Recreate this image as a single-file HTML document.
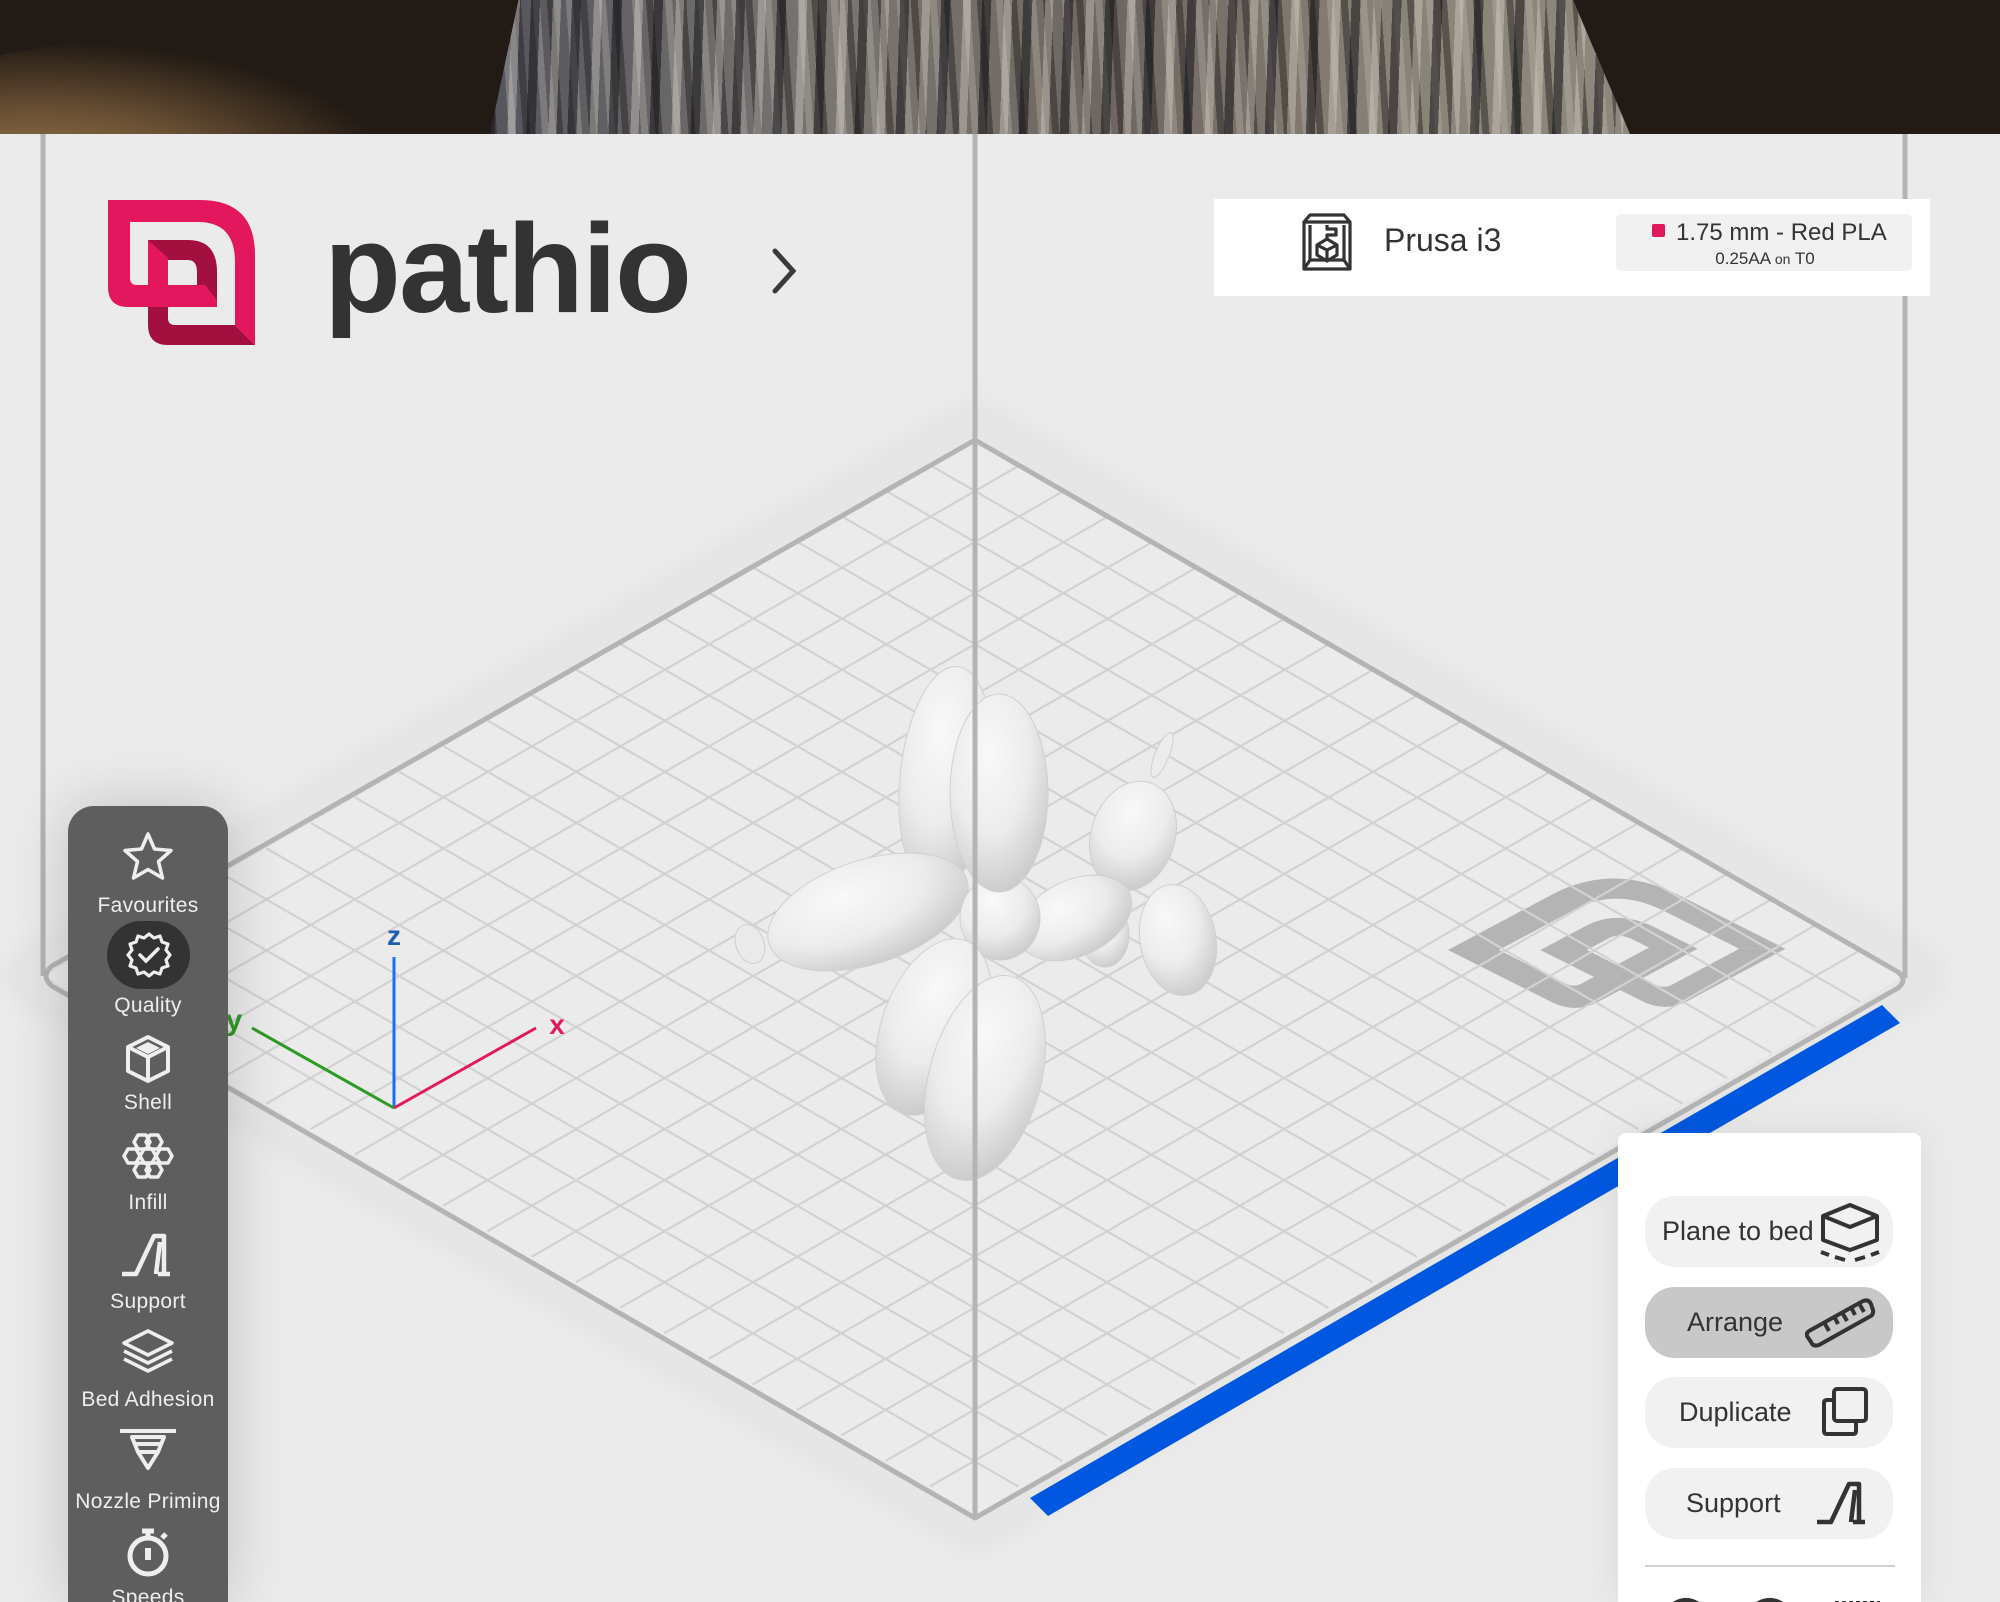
<!DOCTYPE html>
<html style="width:2000px;height:1602px;overflow:hidden;"><head><meta charset="utf-8">
<style>
html,body{margin:0;padding:0;}
body{width:2000px;height:1602px;position:relative;overflow:hidden;background:#ebebeb;font-family:"Liberation Sans",sans-serif;}
.abs{position:absolute;}
#photo{left:0;top:0;width:2000px;height:134px;background:#221a14;overflow:hidden;}
#glow{left:-120px;top:40px;width:520px;height:200px;border-radius:50%;background:radial-gradient(ellipse at 30% 70%,#9c7a4c 0%,#6a5034 35%,rgba(34,26,20,0) 70%);}
#vase{left:490px;top:0;width:1140px;height:134px;clip-path:polygon(2.5% 0,95% 0,100% 100%,0 100%);
background:
repeating-linear-gradient(92deg,rgba(20,20,25,.55) 0 9px,rgba(0,0,0,0) 9px 22px,rgba(230,225,215,.35) 22px 30px,rgba(0,0,0,0) 30px 41px),
repeating-linear-gradient(86deg,rgba(40,35,35,.5) 0 7px,rgba(0,0,0,0) 7px 19px,rgba(200,195,185,.3) 19px 26px,rgba(0,0,0,0) 26px 33px),
linear-gradient(90deg,#55555e 0%,#7a7570 30%,#6e6660 55%,#8a8378 80%,#8e877c 100%);}
.side{left:68px;top:806px;width:160px;height:796px;background:#5e5e5e;border-radius:26px 26px 0 0;box-shadow:0 0 60px rgba(0,0,0,.18);overflow:hidden;}
.lbl{position:absolute;left:0;width:160px;text-align:center;color:#eee;font-size:21px;letter-spacing:.3px;}
#panel{left:1618px;top:1133px;width:303px;height:469px;background:#fff;border-radius:8px 8px 0 0;box-shadow:0 0 40px rgba(0,0,0,.08);overflow:hidden;}
.btn{position:absolute;left:27px;width:248px;height:71px;border-radius:30px;background:#f1f1f1;color:#333;font-size:27px;}
.btn span{position:absolute;top:20px;}
.btn svg{position:absolute;}
</style></head><body>

<div id="photo" class="abs"><div id="glow" class="abs"></div><div id="vase" class="abs"></div></div>

<svg class="abs" style="left:0;top:0" width="2000" height="1602" viewBox="0 0 2000 1602">
<defs>
<filter id="blur" x="-10%" y="-10%" width="120%" height="120%"><feGaussianBlur stdDeviation="14"/></filter>
<radialGradient id="bg1" cx="40%" cy="30%" r="75%"><stop offset="0" stop-color="#f9f9f9"/><stop offset=".55" stop-color="#ececec"/><stop offset="1" stop-color="#c8c8c8"/></radialGradient>
</defs>
<path d="M975,405 L1935,960 Q1950,976 1935,992 L975,1548 L15,992 Q0,976 15,960 Z" fill="#dcdcdc" filter="url(#blur)" opacity=".7"/>
<path d="M975,408 L1932,962 Q1944,976 1932,990 L975,1543 L18,990 Q6,976 18,962 Z" fill="#e6e6e6"/>
<path d="M975,440 L1904,976 L975,1518 L45,976 Z" fill="#ebebeb"/>
<g transform="matrix(165,-88,175,88,1448,950) scale(0.0068) translate(-108,-200)" fill="#b4b4b4">
<path d="M148,240 H188 Q217,240 217,272 V302 L197,287 V272 Q197,260 188,260 H168 V285 H148 Z"/>
<path d="M148,300 V325 Q148,345 168,345 H255 L235,325 H175 Q168,325 168,318 V307 H148 Z"/>
<path d="M108,200 H200 Q255,200 255,255 V345 L235,325 V262 Q235,222 198,222 H130 V278 Q130,285 137,285 H148 V240 L168,258 V285 H205 L217,300 V307 H128 Q108,307 108,287 Z"/>
</g>
<g transform="matrix(929,536,-930,536,975,440)" stroke="#d2d2d2" stroke-width="2.2" fill="none">
<g id="gl">
<line x1="0.0476" y1="0" x2="0.0476" y2="1" vector-effect="non-scaling-stroke"/>
<line x1="0.0952" y1="0" x2="0.0952" y2="1" vector-effect="non-scaling-stroke"/>
<line x1="0.1429" y1="0" x2="0.1429" y2="1" vector-effect="non-scaling-stroke"/>
<line x1="0.1905" y1="0" x2="0.1905" y2="1" vector-effect="non-scaling-stroke"/>
<line x1="0.2381" y1="0" x2="0.2381" y2="1" vector-effect="non-scaling-stroke"/>
<line x1="0.2857" y1="0" x2="0.2857" y2="1" vector-effect="non-scaling-stroke"/>
<line x1="0.3333" y1="0" x2="0.3333" y2="1" vector-effect="non-scaling-stroke"/>
<line x1="0.3810" y1="0" x2="0.3810" y2="1" vector-effect="non-scaling-stroke"/>
<line x1="0.4286" y1="0" x2="0.4286" y2="1" vector-effect="non-scaling-stroke"/>
<line x1="0.4762" y1="0" x2="0.4762" y2="1" vector-effect="non-scaling-stroke"/>
<line x1="0.5238" y1="0" x2="0.5238" y2="1" vector-effect="non-scaling-stroke"/>
<line x1="0.5714" y1="0" x2="0.5714" y2="1" vector-effect="non-scaling-stroke"/>
<line x1="0.6190" y1="0" x2="0.6190" y2="1" vector-effect="non-scaling-stroke"/>
<line x1="0.6667" y1="0" x2="0.6667" y2="1" vector-effect="non-scaling-stroke"/>
<line x1="0.7143" y1="0" x2="0.7143" y2="1" vector-effect="non-scaling-stroke"/>
<line x1="0.7619" y1="0" x2="0.7619" y2="1" vector-effect="non-scaling-stroke"/>
<line x1="0.8095" y1="0" x2="0.8095" y2="1" vector-effect="non-scaling-stroke"/>
<line x1="0.8571" y1="0" x2="0.8571" y2="1" vector-effect="non-scaling-stroke"/>
<line x1="0.9048" y1="0" x2="0.9048" y2="1" vector-effect="non-scaling-stroke"/>
<line x1="0.9524" y1="0" x2="0.9524" y2="1" vector-effect="non-scaling-stroke"/>
</g>
<use href="#gl" transform="matrix(0,1,1,0,0,0)"/>
</g>
<path d="M975,440 L1898,972 Q1908,980 1898,988 L975,1518 L52,986 Q40,976 52,966 Z" fill="none" stroke="#b4b4b4" stroke-width="5" stroke-linejoin="round"/>
<path d="M1030,1498 L1882,1005 L1900,1023 L1048,1516 Z" fill="#0058e0"/>
<line x1="394" y1="1108" x2="394" y2="957" stroke="#1a6ff0" stroke-width="3"/>
<line x1="394" y1="1108" x2="536" y2="1028" stroke="#e3195e" stroke-width="3"/>
<line x1="394" y1="1108" x2="252" y2="1028" stroke="#2f9a25" stroke-width="3"/>
<text x="394" y="945" text-anchor="middle" font-family="Liberation Sans" font-weight="bold" font-size="28" fill="#1c5fb0">z</text>
<text x="557" y="1034" text-anchor="middle" font-family="Liberation Sans" font-weight="bold" font-size="28" fill="#e3195e">x</text>
<text x="234" y="1030" text-anchor="middle" font-family="Liberation Sans" font-weight="bold" font-size="30" fill="#2f9a25">y</text>
<g stroke="#d0d0d0" stroke-width="1">
<ellipse cx="946" cy="778" rx="46" ry="112" fill="url(#bg1)" transform="rotate(6 946 778)"/>
<ellipse cx="1178" cy="940" rx="38" ry="56" fill="url(#bg1)" transform="rotate(-10 1178 940)"/>
<ellipse cx="1105" cy="935" rx="24" ry="32" fill="url(#bg1)"/>
<ellipse cx="1133" cy="836" rx="42" ry="56" fill="url(#bg1)" transform="rotate(18 1133 836)"/>
<ellipse cx="1162" cy="755" rx="7" ry="24" fill="#ececec" transform="rotate(22 1162 755)"/>
<ellipse cx="1075" cy="918" rx="60" ry="38" fill="url(#bg1)" transform="rotate(-25 1075 918)"/>
<ellipse cx="868" cy="912" rx="104" ry="52" fill="url(#bg1)" transform="rotate(-18 868 912)"/>
<ellipse cx="750" cy="944" rx="14" ry="20" fill="#eaeaea" transform="rotate(-20 750 944)"/>
<ellipse cx="1000" cy="918" rx="40" ry="42" fill="url(#bg1)"/>
<ellipse cx="999" cy="793" rx="49" ry="99" fill="url(#bg1)"/>
<ellipse cx="934" cy="1027" rx="52" ry="92" fill="url(#bg1)" transform="rotate(20 934 1027)"/>
<ellipse cx="985" cy="1078" rx="56" ry="105" fill="url(#bg1)" transform="rotate(15 985 1078)"/>
</g>
<line x1="43" y1="134" x2="43" y2="976" stroke="#b4b4b4" stroke-width="5"/>
<line x1="975" y1="134" x2="975" y2="1518" stroke="#b4b4b4" stroke-width="5"/>
<line x1="1905" y1="134" x2="1905" y2="978" stroke="#b4b4b4" stroke-width="5"/>
</svg>

<svg class="abs" style="left:0;top:0" width="300" height="360" viewBox="0 0 300 360">
<path fill="#a3103f" d="M148,240 H188 Q217,240 217,272 V302 L197,287 V272 Q197,260 188,260 H168 V285 H148 Z"/>
<path fill="#a3103f" d="M148,300 V325 Q148,345 168,345 H255 L235,325 H175 Q168,325 168,318 V307 H148 Z"/>
<path fill="#e3175e" d="M108,200 H200 Q255,200 255,255 V345 L235,325 V262 Q235,222 198,222 H130 V278 Q130,285 137,285 H148 V240 L168,258 V285 H205 L217,300 V307 H128 Q108,307 108,287 Z"/>
</svg>
<div class="abs" style="left:324px;top:206px;font-size:126px;font-weight:bold;color:#333;letter-spacing:-2px;line-height:1;">pathio</div>
<svg class="abs" style="left:765px;top:245px" width="40" height="52"><path d="M10,6 L28,26 L10,46" fill="none" stroke="#3a3a3a" stroke-width="5" stroke-linecap="round"/></svg>

<div class="abs" style="left:1214px;top:199px;width:716px;height:97px;background:#fff;"></div>
<svg class="abs" style="left:1296px;top:212px" width="62" height="60" viewBox="0 0 62 60" fill="none" stroke="#333" stroke-width="3.2" stroke-linejoin="round">
<path d="M8,10 L14,3 H48 L54,10 V57 H8 Z"/>
<path d="M8,10 H54"/><path d="M14,13 V48 L8,57 M48,13 V48 L54,57 M14,48 H48"/>
<path d="M31,13 V17 H40 V23 H31 V27"/>
<path d="M21,33 L31,27 L41,33 V43 L31,49 L21,43 Z M21,33 L31,38 L41,33 M31,38 V49"/>
</svg>
<div class="abs" style="left:1384px;top:222px;font-size:32px;color:#333;">Prusa i3</div>
<div class="abs" style="left:1616px;top:214px;width:296px;height:57px;background:#f1f1f1;border-radius:5px;"></div>
<div class="abs" style="left:1652px;top:224px;width:13px;height:13px;background:#e3175e;border-radius:2px;"></div>
<div class="abs" style="left:1676px;top:219px;font-size:24px;color:#333;">1.75 mm - Red PLA</div>
<div class="abs" style="left:1616px;top:249px;width:298px;text-align:center;font-size:17px;color:#333;">0.25AA <span style="font-size:14px">on</span> T0</div>

<div class="abs side">
 <svg class="abs" style="left:52px;top:24px" width="56" height="54" viewBox="0 0 56 54"><path d="M28,4 L34.5,19 L51,20.5 L38.5,31.5 L42.5,48 L28,39.5 L13.5,48 L17.5,31.5 L5,20.5 L21.5,19 Z" fill="none" stroke="#eee" stroke-width="3.5" stroke-linejoin="round"/></svg>
 <div class="lbl" style="top:88px">Favourites</div>
 <div class="abs" style="left:39px;top:115px;width:83px;height:68px;border-radius:34px;background:#333;"></div>
 <svg class="abs" style="left:56px;top:124px" width="50" height="50" viewBox="0 0 50 50"><path d="M25,4 L30,8 L36,6 L38,12 L44,14 L42,20 L46,25 L42,30 L44,36 L38,38 L36,44 L30,42 L25,46 L20,42 L14,44 L12,38 L6,36 L8,30 L4,25 L8,20 L6,14 L12,12 L14,6 L20,8 Z" fill="none" stroke="#eee" stroke-width="3.2" stroke-linejoin="round"/><path d="M16,25 L22,31 L34,19" fill="none" stroke="#eee" stroke-width="3.5" stroke-linecap="round"/></svg>
 <div class="lbl" style="top:188px">Quality</div>
 <svg class="abs" style="left:56px;top:228px" width="48" height="50" viewBox="0 0 48 50"><path d="M24,3 L44,13 V37 L24,47 L4,37 V13 Z" fill="none" stroke="#eee" stroke-width="4" stroke-linejoin="round"/><path d="M4,13 L24,23 L44,13 M24,23 V47" fill="none" stroke="#eee" stroke-width="4"/><path d="M24,8 L36,14 L24,20 L12,14 Z" fill="#eee"/></svg>
 <div class="lbl" style="top:285px">Shell</div>
 <svg class="abs" style="left:52px;top:326px" width="56" height="52" viewBox="0 0 56 52" fill="none" stroke="#eee" stroke-width="3.5" stroke-linejoin="round">
  <path d="M18,3 H26 L30,10 L26,17 H18 L14,10 Z"/><path d="M30,3 H38 L42,10 L38,17 H30 L26,10 Z"/>
  <path d="M8,17 H16 L20,24 L16,31 H8 L4,24 Z"/><path d="M24,17 H32 L36,24 L32,31 H24 L20,24 Z"/><path d="M40,17 H48 L52,24 L48,31 H40 L36,24 Z"/>
  <path d="M18,31 H26 L30,38 L26,45 H18 L14,38 Z"/><path d="M30,31 H38 L42,38 L38,45 H30 L26,38 Z"/></svg>
 <div class="lbl" style="top:385px">Infill</div>
 <svg class="abs" style="left:52px;top:424px" width="56" height="50" viewBox="0 0 56 50"><path d="M2,44 H16 L34,6 H44 V44 M36,44 L40,12 M50,44 H38" fill="none" stroke="#eee" stroke-width="4.5" stroke-linejoin="round"/></svg>
 <div class="lbl" style="top:484px">Support</div>
 <svg class="abs" style="left:52px;top:522px" width="56" height="52" viewBox="0 0 56 52" fill="none" stroke="#eee" stroke-width="3.5" stroke-linejoin="round"><path d="M28,3 L52,15 L28,27 L4,15 Z"/><path d="M4,23 L28,35 L52,23"/><path d="M4,31 L28,43 L52,31"/></svg>
 <div class="lbl" style="top:582px">Bed Adhesion</div>
 <svg class="abs" style="left:50px;top:620px" width="60" height="50" viewBox="0 0 60 50" fill="none" stroke="#eee" stroke-width="4" stroke-linejoin="round"><path d="M2,5 H58"/><path d="M14,11 H46 L40,26 H20 Z"/><path d="M20,26 L30,42 L40,26"/><path d="M18,18 H42"/></svg>
 <div class="lbl" style="top:684px">Nozzle Priming</div>
 <svg class="abs" style="left:54px;top:718px" width="52" height="56" viewBox="0 0 52 56" fill="none" stroke="#eee" stroke-width="5"><circle cx="26" cy="32" r="18"/><path d="M20,7 H32 M26,7 V14 M40,14 L44,10"/><path d="M26,24 V36" stroke-width="6"/></svg>
 <div class="lbl" style="top:780px">Speeds</div>
</div>

<div class="abs" id="panel">
 <div class="btn" style="top:63px"><span style="left:17px">Plane to bed</span>
  <svg style="left:174px;top:6px" width="62" height="60" viewBox="0 0 62 60" fill="none" stroke="#333" stroke-width="4" stroke-linejoin="round"><path d="M31,3 L58,14 V38 L31,48 L4,38 V14 Z"/><path d="M4,14 L31,25 L58,14"/><path d="M2,50 L10,53 M16,55 L26,58 M36,58 L46,55 M52,53 L60,50"/></svg></div>
 <div class="btn" style="top:154px;background:#c8c8c8"><span style="left:42px">Arrange</span>
  <svg style="left:160px;top:6px" width="72" height="60" viewBox="0 0 72 60" fill="none" stroke="#333" stroke-width="4" stroke-linejoin="round"><path d="M4,38 L58,8 Q64,6 66,11 L68,17 Q69,22 64,24 L14,52 Q8,54 6,49 L2,43 Q1,40 4,38 Z"/><path d="M20,31 L24,38 M30,25 L33,31 M38,21 L42,28 M47,16 L50,22 M55,12 L59,19"/></svg></div>
 <div class="btn" style="top:244px"><span style="left:34px">Duplicate</span>
  <svg style="left:176px;top:9px" width="50" height="52" viewBox="0 0 50 52" fill="none" stroke="#333" stroke-width="4" stroke-linejoin="round"><rect x="13" y="3" width="32" height="32" rx="3"/><path d="M13,14 H6 Q3,14 3,17 V45 Q3,48 6,48 H32 Q35,48 35,45 V35"/></svg></div>
 <div class="btn" style="top:335px"><span style="left:41px">Support</span>
  <svg style="left:170px;top:10px" width="56" height="50" viewBox="0 0 56 50"><path d="M2,44 H16 L34,6 H44 V44 M36,44 L40,12 M50,44 H38" fill="none" stroke="#333" stroke-width="4.5" stroke-linejoin="round"/></svg></div>
 <div class="abs" style="left:27px;top:432px;width:250px;height:2px;background:#d2d2d2;"></div>
 <svg class="abs" style="left:40px;top:455px" width="240" height="20"><path d="M10,20 Q28,4 46,20" fill="none" stroke="#333" stroke-width="4"/><path d="M93,20 Q112,4 130,20" fill="none" stroke="#333" stroke-width="4"/><path d="M177,15 H222" stroke="#333" stroke-width="4" stroke-dasharray="4 3"/></svg>
</div>

</body></html>
